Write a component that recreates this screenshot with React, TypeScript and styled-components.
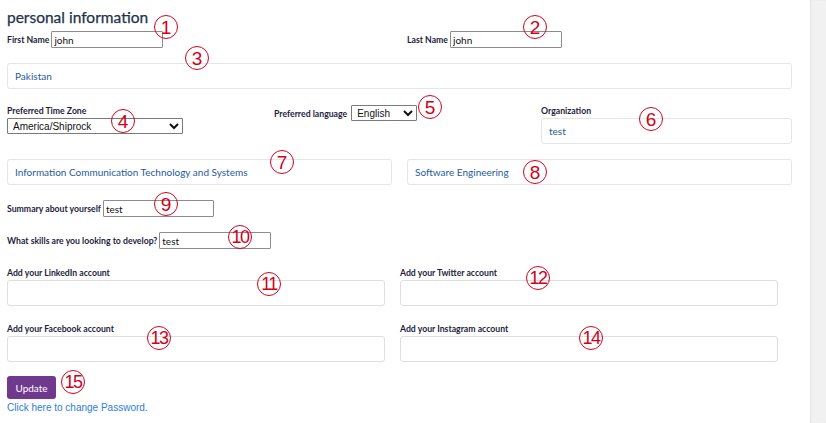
import React from 'react';
import styled, { createGlobalStyle } from 'styled-components';

const GlobalStyle = createGlobalStyle`
  html, body {
    margin: 0;
    padding: 0;
    background: #ffffff;
    font-family: Lato, 'Liberation Sans', sans-serif;
  }
`;

const Page = styled.div`
  position: relative;
  display: flex;
  width: 826px;
  height: 423px;
  overflow: hidden;
`;

const Main = styled.div`
  width: 810px;
  padding: 6px 18px 0 7px;
  box-sizing: border-box;
  display: flex;
  flex-direction: column;
`;

const Side = styled.div`
  width: 16px;
  background: #f1f1f1;
  box-shadow: inset 1px 0 2px rgba(0, 0, 0, 0.06);
`;

const Title = styled.h2`
  margin: 0;
  font-size: 15.5px;
  font-weight: 400;
  color: #22324d;
  line-height: 22px;
  -webkit-text-stroke: 0.25px #22324d;
`;

const Label = styled.label`
  font-size: 8.7px;
  font-weight: 700;
  color: #1e1e3c;
  white-space: nowrap;
`;

const Row = styled.div<{ $cols?: string; $gap?: number; $top?: number; $width?: string }>`
  display: grid;
  grid-template-columns: ${p => p.$cols || '1fr'};
  column-gap: ${p => p.$gap ?? 15}px;
  margin-top: ${p => p.$top ?? 0}px;
  width: ${p => p.$width || 'auto'};
  align-items: start;
`;

const Inline = styled.div<{ $top?: number; $gap?: number }>`
  display: flex;
  align-items: center;
  gap: ${p => p.$gap ?? 2}px;
  margin-top: ${p => p.$top ?? 0}px;
`;

const Stack = styled.div`
  display: flex;
  flex-direction: column;
  gap: 2px;
`;

const TextInput = styled.input<{ $w: number }>`
  width: ${p => p.$w}px;
  height: 17px;
  box-sizing: border-box;
  border: 1px solid #8d8d8d;
  border-radius: 1px;
  padding: 0 2px;
  font-family: Lato, 'Liberation Sans', sans-serif;
  font-size: 10px;
  color: #111;
`;

const Select = styled.select<{ $w: number }>`
  width: ${p => p.$w}px;
  height: 16px;
  box-sizing: border-box;
  border: 1px solid #7a7a7a;
  border-radius: 1px;
  padding: 0 1px;
  font-family: 'Liberation Sans', Arial, sans-serif;
  font-size: 10px;
  color: #111;
  background: #fff;
`;

const Box = styled.div`
  height: 26px;
  box-sizing: border-box;
  border: 1px solid #e6e6e6;
  border-radius: 3px;
  padding: 0 7px;
  display: flex;
  align-items: center;
  font-size: 10px;
  color: #1f5a9e;
`;

const Field = styled.div`
  height: 26px;
  box-sizing: border-box;
  border: 1px solid #dedede;
  border-radius: 3px;
`;

const Button = styled.button`
  width: 49px;
  height: 23px;
  margin-top: 14px;
  border: none;
  border-radius: 3px;
  background: #6f3a8e;
  color: #fff;
  font-family: Lato, 'Liberation Sans', sans-serif;
  font-size: 10px;
  padding: 0;
`;

const PassLink = styled.a`
  font-family: 'Liberation Sans', Arial, sans-serif;
  font-size: 10px;
  color: #2b7de0;
  text-decoration: none;
  margin-top: 3px;
`;

const Mark = styled.span<{ $x: number; $y: number; $wide?: boolean }>`
  position: absolute;
  left: ${p => p.$x - 12}px;
  top: ${p => p.$y - 12}px;
  width: 24px;
  height: 24px;
  box-sizing: border-box;
  border: 1.5px solid #d0021b;
  border-radius: 50%;
  display: flex;
  align-items: center;
  justify-content: center;
  font-family: 'Liberation Sans', Arial, sans-serif;
  font-size: ${p => (p.$wide ? 18 : 19)}px;
  letter-spacing: ${p => (p.$wide ? -1.5 : 0)}px;
  color: #d0021b;
  line-height: 1;
`;

const marks: [number, number, number][] = [
  [1, 166, 27], [2, 535, 27], [3, 197, 58], [4, 123, 121], [5, 430, 107],
  [6, 651, 119], [7, 282, 162], [8, 535, 172], [9, 166, 204], [10, 240, 237],
  [11, 269, 284], [12, 538, 278], [13, 159, 338], [14, 591, 338], [15, 73, 382],
];

const App: React.FC = () => {
  return (
    <Page>
      <GlobalStyle />
      <Main>
        <Title>personal information</Title>
        <Row $cols="1fr 1fr" $top={3}>
          <Inline>
            <Label>First Name</Label>
            <TextInput $w={112} defaultValue="john" />
          </Inline>
          <Inline>
            <Label>Last Name</Label>
            <TextInput $w={112} defaultValue="john" />
          </Inline>
        </Row>
        <Row $top={15}>
          <Box>Pakistan</Box>
        </Row>
        <Row $cols="251px 251px 251px" $gap={16} $top={16}>
          <Stack>
            <Label>Preferred Time Zone</Label>
            <Select $w={176} defaultValue="America/Shiprock">
              <option>America/Shiprock</option>
            </Select>
          </Stack>
          <Inline $gap={4}>
            <Label>Preferred language</Label>
            <Select $w={66} defaultValue="English">
              <option>English</option>
            </Select>
          </Inline>
          <Stack>
            <Label>Organization</Label>
            <Box>test</Box>
          </Stack>
        </Row>
        <Row $cols="1fr 1fr" $top={15}>
          <Box>Information Communication Technology and Systems</Box>
          <Box>Software Engineering</Box>
        </Row>
        <Inline $top={15}>
          <Label>Summary about yourself</Label>
          <TextInput $w={111} defaultValue="test" />
        </Inline>
        <Inline $top={15}>
          <Label>What skills are you looking to develop?</Label>
          <TextInput $w={112} defaultValue="test" />
        </Inline>
        <Row $cols="1fr 1fr" $width="771px" $top={18}>
          <Stack>
            <Label>Add your LinkedIn account</Label>
            <Field />
          </Stack>
          <Stack>
            <Label>Add your Twitter account</Label>
            <Field />
          </Stack>
        </Row>
        <Row $cols="1fr 1fr" $width="771px" $top={17}>
          <Stack>
            <Label>Add your Facebook account</Label>
            <Field />
          </Stack>
          <Stack>
            <Label>Add your Instagram account</Label>
            <Field />
          </Stack>
        </Row>
        <div>
          <Button>Update</Button>
        </div>
        <PassLink href="#">Click here to change Password.</PassLink>
      </Main>
      <Side />
      {marks.map(([n, x, y]) => (
        <Mark key={n} $x={x} $y={y} $wide={n > 9}>{n}</Mark>
      ))}
    </Page>
  );
};

export default App;
